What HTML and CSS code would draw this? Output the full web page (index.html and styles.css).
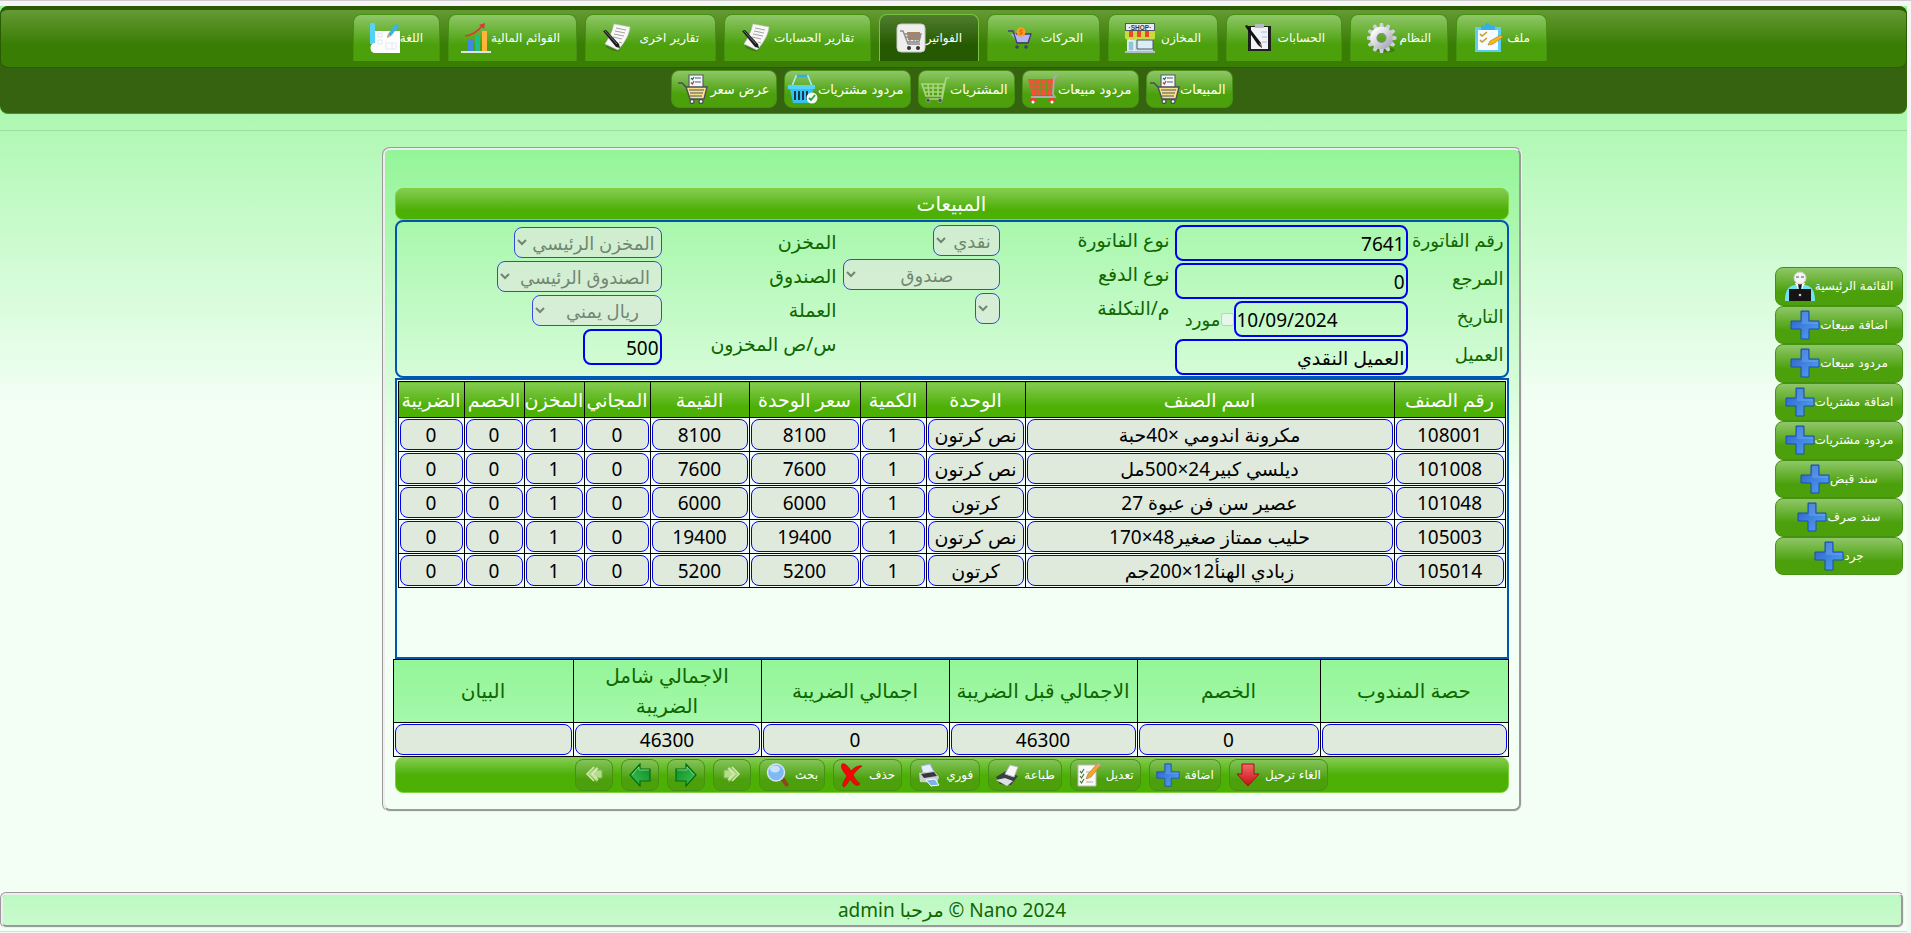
FILE: index.html
```html
<!DOCTYPE html>
<html lang="ar" dir="rtl">
<head>
<meta charset="utf-8">
<title>المبيعات</title>
<link rel="stylesheet" href="styles.css">
</head>
<body>
<svg class="sprite" aria-hidden="true">
  <defs>
    <linearGradient id="gBlue" x1="0" y1="0" x2="1" y2="1"><stop offset="0" stop-color="#2a5fc8"/><stop offset="1" stop-color="#55a5f5"/></linearGradient>
    <linearGradient id="gGreen" x1="0" y1="0" x2="1" y2="1"><stop offset="0" stop-color="#0c8a20"/><stop offset="1" stop-color="#3fc45a"/></linearGradient>
    <linearGradient id="gRed" x1="0" y1="0" x2="0" y2="1"><stop offset="0" stop-color="#f06a6a"/><stop offset="1" stop-color="#c80d14"/></linearGradient>
    <linearGradient id="gSilver" x1="0" y1="0" x2="1" y2="1"><stop offset="0" stop-color="#fff"/><stop offset="1" stop-color="#a9a9b8"/></linearGradient>
  </defs>
  <symbol id="plus" viewBox="0 0 30 30">
    <path d="M11 1h8v10h10v8H19v10h-8V19H1v-8h10z" fill="url(#gBlue)" stroke="#1d4fa8"/>
    <path d="M12 2h6v10h10v2H12z" fill="#7db4f5" opacity=".35"/>
  </symbol>
  <symbol id="paper" viewBox="0 0 30 30">
    <path d="M10 5l16 2-9 21c-4 1-9-1-13-4z" fill="#2d4d18" opacity=".4"/>
    <path d="M12 1l16 3c-1 8-5 15-12 23L3 21C7 15 10 9 12 1z" fill="#f8f8f8" stroke="#c9c9c9" stroke-width=".6"/>
    <path d="M14 5l10 2M13 8l10 2M12 11l10 2M11 14l9 2M17 19l3 1" stroke="#999" stroke-width=".9"/>
    <path d="M1 8l3-1 13 14 1 4-4-1z" fill="#1d1d1d"/><path d="M3 8l12 13" stroke="#888" stroke-width=".8"/>
  </symbol>
  <symbol id="cartlist" viewBox="0 0 30 30">
    <path d="M11 1h14v13H11z" fill="#f5f7fa" stroke="#555f68" stroke-width="1.2"/>
    <path d="M17 4h6M17 8h6" stroke="#555f68" stroke-width="1.2"/>
    <path d="M13 4l1.500 1.500L16 3" fill="none" stroke="#11765d" stroke-width="1.200"/>
    <path d="M13 8.500l1.500 1.500L16 7" fill="none" stroke="#b3353c" stroke-width="1.200"/>
    <path d="M8 13h21l-3 12H12z" fill="#fbe08c" stroke="#4a5057" stroke-width="1.4"/>
    <path d="M0 9h4l4 4" fill="none" stroke="#4a5057" stroke-width="1.600"/>
    <path d="M11 16h15M12 19h13M12 22h12" stroke="#4a5057" stroke-width="1.200"/>
    <circle cx="14" cy="27.500" r="2" fill="#fff" stroke="#4a5057" stroke-width="1.300"/><circle cx="23" cy="27.500" r="2" fill="#fff" stroke="#4a5057" stroke-width="1.300"/>
  </symbol>
  <symbol id="arrow" viewBox="0 0 24 24">
    <path d="M2 6h10V1l10 11-10 11v-5H2z" fill="url(#gGreen)" stroke="#046b16" stroke-width="1.200"/>
    <path d="M3 7h10V4l7 8" fill="none" stroke="#8be59a" stroke-width=".8"/>
  </symbol>
  <symbol id="arrowdim" viewBox="0 0 24 24">
    <path d="M4 7h5V3l9 8-9 8v-4H4z" fill="#b5dc8a" stroke="#7fb550"/><path d="M12 4l7 7-7 7M8 5l6 6-6 6" fill="none" stroke="#d5ecb4" stroke-width="1.500"/>
    <path d="M6 22h13" stroke="#4f9422" opacity=".6"/>
  </symbol>
</svg>

<header class="top">
  <nav class="menu" aria-label="القائمة">
    <a class="tab" href="#"><span>ملف</span><svg viewBox="0 0 30 30"><path d="M2 4h26v25H2z" fill="#5ecdf0"/><path d="M5 7h20v20H5z" fill="#f5fbff"/><path d="M8 3h4c0-4 5-4 6 0h4v4H8z" fill="#38afe0"/><path d="M7 11l2 2 5-4M7 17l2 2 5-4" fill="none" stroke="#c89a28" stroke-width="1.600"/><path d="M15 22l2-4 11-6 2 2-10 7z" fill="#f5b81c" stroke="#a87510" stroke-width=".6"/></svg></a>
    <a class="tab" href="#"><span>النظام</span><svg viewBox="0 0 30 30"><ellipse cx="19" cy="27" rx="9" ry="2.500" fill="#244d0a" opacity=".4"/><g fill="#cfcfdd"><path id="tooth" d="M12 5l1-5h3l1 5z"/><use href="#tooth" transform="rotate(30 14.500 15)"/><use href="#tooth" transform="rotate(60 14.500 15)"/><use href="#tooth" transform="rotate(90 14.500 15)"/><use href="#tooth" transform="rotate(120 14.500 15)"/><use href="#tooth" transform="rotate(150 14.500 15)"/><use href="#tooth" transform="rotate(180 14.500 15)"/><use href="#tooth" transform="rotate(210 14.500 15)"/><use href="#tooth" transform="rotate(240 14.500 15)"/><use href="#tooth" transform="rotate(270 14.500 15)"/><use href="#tooth" transform="rotate(300 14.500 15)"/><use href="#tooth" transform="rotate(330 14.500 15)"/></g><circle cx="14.500" cy="15" r="8" fill="none" stroke="url(#gSilver)" stroke-width="6.500"/><circle cx="14.500" cy="15" r="4.500" fill="none" stroke="#8d8da3" stroke-width="1.200"/></svg></a>
    <a class="tab" href="#"><span>الحسابات</span><svg viewBox="0 0 30 30"><path d="M5 3h23v25H5z" fill="#1f1f1f"/><path d="M8 4h17v22H8z" fill="#f0f3f8"/><path d="M12 1h9v4h-9z" fill="#b5b9c0"/><path d="M18 9h6M19 14h5M19 19h5" stroke="#a8bfe0" stroke-width="1.200"/><path d="M2 3l2-1 14 18 1 5-4-3z" fill="#111"/><path d="M16 20l2 1 1 4z" fill="#d09048"/></svg></a>
    <a class="tab" href="#"><span>المخازن</span><svg viewBox="0 0 30 30"><path d="M2 14h26v15H2z" fill="#cde3e6"/><path d="M0 0h30v8H0z" fill="#4e5566"/><path d="M1 1h28v6H1z" fill="#e9edf2"/><text x="15" y="6.500" font-size="6.500" font-weight="700" text-anchor="middle" fill="#333a48" font-family="Liberation Sans">·SHOP·</text><path d="M0 8h30v5a2.500 2.500 0 0 1-5 2 2.500 2.500 0 0 1-5 0 2.500 2.500 0 0 1-5 0 2.500 2.500 0 0 1-5 0 2.500 2.500 0 0 1-5 0 2.500 2.500 0 0 1-5-2z" fill="#c8dc3c"/><path d="M4 8h4v6H4zM12 8h4v6h-4zM20 8h4v6h-4z" fill="#f0442e"/><path d="M3 18h6v10H3z" fill="#8cc6de" stroke="#fff"/><path d="M12 17h16v9H12z" fill="#d8f0f5" stroke="#4e5566"/><path d="M0 28h30v2H0z" fill="#b8bcc6"/></svg></a>
    <a class="tab" href="#"><span>الحركات</span><svg viewBox="0 0 30 30"><path d="M7 11h20l-3 8H13z" fill="#b7b4f0"/><path d="M4 8h5l4 12h11l3-9H12" fill="none" stroke="#443a80" stroke-width="1.300"/><circle cx="17" cy="9" r="4.500" fill="#ff9d1e"/><path d="M19 7h-3v2h2v2h-3" fill="none" stroke="#e05a10"/><circle cx="13" cy="24" r="1.800" fill="#443a80"/><circle cx="22" cy="24" r="1.800" fill="#443a80"/></svg></a>
    <a class="tab active" href="#" aria-current="page"><span>الفواتير</span><svg viewBox="0 0 30 30"><rect x="1" y="1" width="28" height="28" rx="4" fill="#eeeeec" stroke="#c9c9c9"/><path d="M11 9h13v8H12z" fill="#b88058"/><path d="M4 8h3l5 13h12M8 11h17l-2 8H11M9 14h16M14 11v8M18 11v8M21 11v8" fill="none" stroke="#8b8b8b" stroke-width="1.300"/><circle cx="13" cy="25" r="2" fill="#333"/><circle cx="22" cy="25" r="2" fill="#333"/></svg></a>
    <a class="tab" href="#"><span>تقارير الحسابات</span><svg><use href="#paper"/></svg></a>
    <a class="tab" href="#"><span>تقارير اخرى</span><svg><use href="#paper"/></svg></a>
    <a class="tab" href="#"><span>القوائم المالية</span><svg viewBox="0 0 30 30"><path d="M7 16h5v12H7z" fill="#3f8ae0"/><path d="M14 12h5v16h-5z" fill="#1dbf8e"/><path d="M21 8h5v20h-5z" fill="#ffb43c"/><path d="M0 29h30" stroke="#dfe5e0" stroke-width="2"/><path d="M4 13C12 12 17 8 21 3" fill="none" stroke="#e03535" stroke-width="1.500"/><path d="M18 2l6-2-1 6z" fill="#e03535"/></svg></a>
    <a class="tab" href="#"><span>اللغة</span><svg viewBox="0 0 30 30"><path d="M0 2a2.500 2.500 0 0 1 5 0v19H0z" fill="#55d2f5"/><path d="M5 8h25v22H5c-6 0-6-10 0-10z" fill="#fbfdff"/><path d="M8 10h4v4H8zM8 17h4v4H8zM16 20h10v6H16zM22 20v6" fill="none" stroke="#e4e9ee"/><path d="M17 15l1-4 8-10 3 2-8 10z" fill="#38b5e6"/><path d="M17 15l1-4 3 2z" fill="#e6a860"/></svg></a>
  </nav>
  <nav class="submenu" aria-label="الفواتير">
    <a class="pill" href="#"><span>المبيعات</span><svg><use href="#cartlist"/></svg></a>
    <a class="pill" href="#"><span>مردود مبيعات</span><svg viewBox="0 0 30 30"><path d="M0 5h27l-3 16H4z" fill="#f5503c"/><path d="M2 10h24M3 15h22M7 6l1 15M13 6v15M19 6l-1 15" stroke="#55a51a" stroke-width="1.200"/><path d="M29 1l-3 3-1 16 2 3H3" fill="none" stroke="#a8adb0" stroke-width="1.800"/><path d="M1 28a4 4 0 0 1 8 0zM20 28a4 4 0 0 1 8 0z" fill="#f0402e"/><circle cx="5" cy="28" r="1.500" fill="#fff"/><circle cx="24" cy="28" r="1.500" fill="#fff"/></svg></a>
    <a class="pill" href="#"><span>المشتريات</span><svg viewBox="0 0 30 30"><path d="M2 10h22l-2 12H6zM3 14h20M4 18h19M8 10l1 12M13 10v12M18 10v12M29 4h-3l-4 21H7" fill="none" stroke="#a9d57e" stroke-width="1.700"/><circle cx="8" cy="26.500" r="2" fill="#445245" stroke="#8aa382"/><circle cx="20" cy="26.500" r="2" fill="#445245" stroke="#8aa382"/></svg></a>
    <a class="pill" href="#"><span>مردود مشتريات</span><svg viewBox="0 0 30 30"><path d="M4 12L8 2h12l4 10" fill="none" stroke="#a8ecff" stroke-width="1.600"/><path d="M9 2h10" stroke="#2bb0e0" stroke-width="2.500"/><path d="M0 11h27v4H0z" fill="#54d5f8"/><path d="M2 15h23l-3 14H5z" fill="#35c2ee"/><path d="M7 17v9M11 17v9M15 17v9M19 17v9" stroke="#17364f" stroke-width="2"/><circle cx="24" cy="24" r="5.500" fill="#f5faf5"/><path d="M21 24l2 2 4-5" fill="none" stroke="#27a045" stroke-width="1.800"/></svg></a>
    <a class="pill" href="#"><span>عرض سعر</span><svg><use href="#cartlist"/></svg></a>
  </nav>
</header>

<hr class="divider">

<main class="page">
  <aside class="side">
    <a class="pill" href="#"><span>القائمة الرئيسية</span><svg viewBox="0 0 30 30"><path d="M0 30c0-10 3-15 10-16h10c7 1 10 6 10 16z" fill="#6fe3f5"/><path d="M10 12h10l-5 10z" fill="#fff"/><path d="M13 13h4l-1 6h-2z" fill="#1e1e1e"/><circle cx="15" cy="7" r="6" fill="#f3f3f3" stroke="#d0d0d0"/><path d="M11 6h3M16 6h3" stroke="#555"/><path d="M4 18h22v12H4z" fill="#141414"/><circle cx="15" cy="24" r="1.300" fill="#ccc"/></svg></a>
    <a class="pill" href="#"><span>اضافة مبيعات</span><svg><use href="#plus"/></svg></a>
    <a class="pill" href="#"><span>مردود مبيعات</span><svg><use href="#plus"/></svg></a>
    <a class="pill" href="#"><span>اضافة مشتريات</span><svg><use href="#plus"/></svg></a>
    <a class="pill" href="#"><span>مردود مشتريات</span><svg><use href="#plus"/></svg></a>
    <a class="pill" href="#"><span>سند قبض</span><svg><use href="#plus"/></svg></a>
    <a class="pill" href="#"><span>سند صرف</span><svg><use href="#plus"/></svg></a>
    <a class="pill" href="#"><span>جرد</span><svg><use href="#plus"/></svg></a>
  </aside>

  <form class="invoice">
    <h1 class="title">المبيعات</h1>

    <div class="fields">
      <div class="group group-main">
        <label for="no">رقم الفاتورة</label><input id="no" type="text" value="7641">
        <label for="ref">المرجع</label><input id="ref" type="text" value="0">
        <label for="date">التاريخ</label>
        <div class="date-row"><input id="date" type="text" dir="ltr" value="10/09/2024"><input id="supplier" class="check" type="checkbox" disabled><label for="supplier">مورد</label></div>
        <label for="client">العميل</label><input id="client" type="text" value="العميل النقدي">
      </div>
      <div class="group group-pay">
        <label for="kind">نوع الفاتورة</label><select id="kind" class="w-kind" disabled><option>نقدي</option></select>
        <label for="pay">نوع الدفع</label><select id="pay" class="w-pay" disabled><option>صندوق</option></select>
        <label for="cost">م/التكلفة</label><select id="cost" class="w-cost" disabled><option></option></select>
      </div>
      <div class="group group-store">
        <label for="store">المخزن</label><select id="store" class="w-store" disabled><option>المخزن الرئيسي</option></select>
        <label for="box">الصندوق</label><select id="box" class="w-box" disabled><option>الصندوق الرئيسي</option></select>
        <label for="cur">العملة</label><select id="cur" class="w-cur" disabled><option>ريال يمني</option></select>
        <label for="stock">س/ص المخزون</label><input id="stock" class="w-stock" type="text" value="500">
      </div>
    </div>

    <div class="lines">
      <table class="items">
        <colgroup><col class="c-no"><col class="c-name"><col class="c-unit"><col class="c-s"><col class="c-no"><col class="c-unit"><col class="c-s"><col class="c-xs"><col class="c-xs"><col class="c-s"></colgroup>
        <thead><tr><th>رقم الصنف</th><th>اسم الصنف</th><th>الوحدة</th><th>الكمية</th><th>سعر الوحدة</th><th>القيمة</th><th>المجاني</th><th>المخزن</th><th>الخصم</th><th>الضريبة</th></tr></thead>
        <tbody>
          <tr><td><input aria-label="رقم الصنف" value="108001"></td><td><input aria-label="اسم الصنف" value="مكرونة اندومي ×40حبة"></td><td><input aria-label="الوحدة" value="نص كرتون"></td><td><input aria-label="الكمية" value="1"></td><td><input aria-label="سعر الوحدة" value="8100"></td><td><input aria-label="القيمة" value="8100"></td><td><input aria-label="المجاني" value="0"></td><td><input aria-label="المخزن" value="1"></td><td><input aria-label="الخصم" value="0"></td><td><input aria-label="الضريبة" value="0"></td></tr>
          <tr><td><input aria-label="رقم الصنف" value="101008"></td><td><input aria-label="اسم الصنف" value="ديلسي كبير24×500مل"></td><td><input aria-label="الوحدة" value="نص كرتون"></td><td><input aria-label="الكمية" value="1"></td><td><input aria-label="سعر الوحدة" value="7600"></td><td><input aria-label="القيمة" value="7600"></td><td><input aria-label="المجاني" value="0"></td><td><input aria-label="المخزن" value="1"></td><td><input aria-label="الخصم" value="0"></td><td><input aria-label="الضريبة" value="0"></td></tr>
          <tr><td><input aria-label="رقم الصنف" value="101048"></td><td><input aria-label="اسم الصنف" value="عصير سن فن عبوة 27"></td><td><input aria-label="الوحدة" value="كرتون"></td><td><input aria-label="الكمية" value="1"></td><td><input aria-label="سعر الوحدة" value="6000"></td><td><input aria-label="القيمة" value="6000"></td><td><input aria-label="المجاني" value="0"></td><td><input aria-label="المخزن" value="1"></td><td><input aria-label="الخصم" value="0"></td><td><input aria-label="الضريبة" value="0"></td></tr>
          <tr><td><input aria-label="رقم الصنف" value="105003"></td><td><input aria-label="اسم الصنف" value="حليب ممتاز صغير48×170"></td><td><input aria-label="الوحدة" value="نص كرتون"></td><td><input aria-label="الكمية" value="1"></td><td><input aria-label="سعر الوحدة" value="19400"></td><td><input aria-label="القيمة" value="19400"></td><td><input aria-label="المجاني" value="0"></td><td><input aria-label="المخزن" value="1"></td><td><input aria-label="الخصم" value="0"></td><td><input aria-label="الضريبة" value="0"></td></tr>
          <tr><td><input aria-label="رقم الصنف" value="105014"></td><td><input aria-label="اسم الصنف" value="زبادي الهنأ12×200جم"></td><td><input aria-label="الوحدة" value="كرتون"></td><td><input aria-label="الكمية" value="1"></td><td><input aria-label="سعر الوحدة" value="5200"></td><td><input aria-label="القيمة" value="5200"></td><td><input aria-label="المجاني" value="0"></td><td><input aria-label="المخزن" value="1"></td><td><input aria-label="الخصم" value="0"></td><td><input aria-label="الضريبة" value="0"></td></tr>
        </tbody>
      </table>
    </div>

    <table class="totals">
      <colgroup><col class="t-a"><col class="t-b"><col class="t-a"><col class="t-a"><col class="t-a"><col class="t-c"></colgroup>
      <thead><tr><th>حصة المندوب</th><th>الخصم</th><th>الاجمالي قبل الضريبة</th><th>اجمالي الضريبة</th><th>الاجمالي شامل الضريبة</th><th>البيان</th></tr></thead>
      <tbody><tr><td><input aria-label="حصة المندوب" value=""></td><td><input aria-label="الخصم" value="0"></td><td><input aria-label="الاجمالي قبل الضريبة" value="46300"></td><td><input aria-label="اجمالي الضريبة" value="0"></td><td><input aria-label="الاجمالي شامل الضريبة" value="46300"></td><td><input aria-label="البيان" value=""></td></tr></tbody>
    </table>

    <div class="toolbar">
      <button type="button"><span>الغاء ترحيل</span><svg viewBox="0 0 24 24"><path d="M6 1h12v10h5L12 23 1 11h5z" fill="url(#gRed)" stroke="#a50e12"/></svg></button>
      <button type="button"><span>اضافة</span><svg><use href="#plus"/></svg></button>
      <button type="button"><span>تعديل</span><svg viewBox="0 0 24 24"><path d="M1 2h18v21H1z" fill="#fafafa" stroke="#b9bdb5"/><path d="M3 8l1.500 2L7 6M3 13l1.500 2L7 11M3 18l1.500 2L7 16" fill="none" stroke="#3c7c28" stroke-width="1.200"/><path d="M9 9h6M9 19h7" stroke="#aaa"/><path d="M9 16l2-5L20 1l3 2-9 11z" fill="#f5a52a" stroke="#b0701c" stroke-width=".6"/><path d="M19 2l2-2 3 2-2 2z" fill="#e596a8"/></svg></button>
      <button type="button"><span>طباعة</span><svg viewBox="0 0 24 24"><path d="M1 14l10-6 12 5-7 9-11-1z" fill="#3a3f44"/><path d="M10 11l5-9 8 2-4 10z" fill="#f8f8fa" stroke="#b5b9be"/><path d="M1 17l9-2 8 3-6 5z" fill="#dcdfe4"/></svg></button>
      <button type="button"><span>فوري</span><svg viewBox="0 0 24 24"><path d="M6 10L4 3l9-2 4 8z" fill="#e2eefb" stroke="#9db4cf"/><path d="M2 10l15-2 5 6-2 6-17-1z" fill="#c9cdd2"/><path d="M4 11l13-2 3 4-13 2z" fill="#33383d"/><path d="M9 17l9-1 4 6-8 1z" fill="#7fb1ea" stroke="#fff"/></svg></button>
      <button type="button"><span>حذف</span><svg viewBox="0 0 24 24"><path d="M2 1c3-1 6 2 9 7 3-3 7-6 11-5-4 3-7 6-9 9 2 4 4 6 7 9-3 3-6 1-10-5-2 3-3 6-6 8-2-1-2-3 3-11C4 9 0 5 2 1z" fill="#f50505" stroke="#b00" stroke-width=".6"/></svg></button>
      <button type="button"><span>بحث</span><svg viewBox="0 0 24 24"><path d="M14 16l4-2 5 8-3 2z" fill="#8a4a1e"/><circle cx="10" cy="9.500" r="8.500" fill="#7fb9f5" stroke="#d5e3f2" stroke-width="1.500"/><ellipse cx="9" cy="6" rx="5" ry="3.500" fill="#d8ecff" opacity=".8"/></svg></button>
      <button type="button" aria-label="الأول"><svg><use href="#arrowdim"/></svg></button>
      <button type="button" aria-label="السابق"><svg><use href="#arrow"/></svg></button>
      <button type="button" aria-label="التالي"><svg class="flip"><use href="#arrow"/></svg></button>
      <button type="button" aria-label="الأخير"><svg class="flip"><use href="#arrowdim"/></svg></button>
    </div>
  </form>
</main>

<footer class="foot" dir="ltr">admin مرحبا © Nano 2024</footer>
</body>
</html>
```
FILE: styles.css
```css
* { box-sizing: border-box; }

html {
  border-top: 1px solid #ccc;
  background: #f5f5f5;
}

body {
  margin: 5px 4px 0 0;
  min-height: 926px;
  display: flex;
  flex-direction: column;
  font-family: "Noto Sans", "DejaVu Sans", sans-serif;
  font-size: 19px;
  color: #106600;
  background: linear-gradient(#94f598, #f3fff5 400px);
  border-bottom: 1px solid #ddd;
}

a { color: inherit; text-decoration: none; }

.sprite { position: absolute; width: 0; height: 0; }

/* header */
.top {
  border-radius: 8px;
  background: #35630f;
  border-bottom: 1px solid #4b9412;
  overflow: hidden;
  font-size: 13px;
  font-family: "DejaVu Sans", sans-serif;
  color: #fff;
}

.menu, .submenu {
  display: grid;
  justify-content: center;
}

.menu {
  grid-template-columns: 91px 98px 116px 110px 113px 100px 147px 131px 129px 87px;
  gap: 8px;
  padding: 4px 11px 6px 4px;
  border: 1px solid #2a5c04;
  border-top-width: 4px;
  border-radius: 8px;
  background: linear-gradient(#659a35, #3a7d05 60%);
  font-size: 12px;
}

.submenu {
  grid-template-columns: 87px 117px 97px 127px 106px;
  gap: 7px;
  padding: 2px 4px 5px 0;
}

.tab, .pill {
  display: flex;
  align-items: center;
  justify-content: space-between;
  white-space: nowrap;
  border: 1px solid #459212;
  background: linear-gradient(#8fc768, #4ba00c 65%);
}

.tab {
  height: 47px;
  padding: 0 16px;
  border-bottom: 0;
  border-radius: 8px 8px 0 0;
}

.tab.active {
  border-color: #7ac142;
  background: linear-gradient(#507d2e, #265a02 65%);
}

.pill {
  height: 38px;
  padding: 0 6px;
  border-radius: 8px;
}

.tab svg, .pill svg { width: 30px; height: 30px; flex: none; }

.divider {
  width: 100%;
  height: 1px;
  margin: 16px 0;
  border: 0;
  background: #a0dba5;
}

/* page body */
.page {
  flex: 1;
  display: grid;
  grid-template-columns: 1fr minmax(0, 1140px) 1fr;
  align-items: start;
  padding-right: 4px;
}

.side {
  display: grid;
  grid-template-rows: repeat(8, 1fr);
  width: 128px;
  height: 308px;
  margin-top: 120px;
  font-family: "DejaVu Sans", sans-serif;
  font-size: 12px;
  color: #fff;
}

.side .pill { height: auto; justify-content: center; }

.invoice {
  padding: 38px 10px 16px;
  border: 3px groove #eee;
  border-radius: 8px;
  background: linear-gradient(#94f598, #f3fff5 330px);
}

.title {
  height: 32px;
  margin: 0;
  border: 1px solid #7ed13c;
  border-radius: 8px;
  font-size: 20px;
  font-weight: 400;
  line-height: 30px;
  text-align: center;
  color: #fff;
  background: linear-gradient(#85cc52, #4db005 70%);
}

.fields {
  display: flex;
  border: 2px solid #0056b3;
  border-radius: 8px;
  height: 158px;
}

.group {
  display: grid;
  align-content: start;
}

.group label { line-height: 30px; white-space: nowrap; }
.group-main label { font-size: 18px; }

.group-main { grid-template-columns: 96px 233px; row-gap: 2px; padding: 3px 3px 0 0; }
.group-pay { grid-template-columns: 170px 158px; row-gap: 3px; padding: 3px 5px 0 0; }
.group-store { grid-template-columns: 175px 166px; row-gap: 3px; padding: 5px 5px 0 0; }

.fields input, .fields select {
  font: inherit;
  border-radius: 8px;
}

.fields input[type="text"] {
  width: 100%;
  height: 36px;
  padding: 2px 1px 0;
  border: 2px solid #00e;
  color: #000;
  background: transparent;
}

.fields select {
  height: 31px;
  padding: 0;
  border: 1px solid #00e;
  font-size: 18px;
  text-align: center;
  color: #555;
  background: #dfeadd;
}

.date-row { display: flex; align-items: center; }
.fields .date-row input[type="text"] { width: 174px; }
.check { width: 13px; height: 13px; margin: 0; }

.w-kind { width: 67px; }
.w-pay { width: 157px; }
.w-cost { width: 25px; }
.w-store { width: 148px; }
.w-box { width: 165px; }
.w-cur { width: 130px; }
.fields input.w-stock { width: 79px; }

/* tables */
.lines {
  height: 281px;
  padding: 1px;
  border: 2px solid #0056b3;
  background: #f3fff5;
}

table {
  width: 100%;
  table-layout: fixed;
  border-collapse: collapse;
}

th, td { border: 1px solid #000; padding: 1px; height: 34px; }

th { font-weight: 400; font-size: 20px; white-space: nowrap; }

.items th {
  height: 36px;
  padding: 0;
  color: #fff;
  font-size: 19px;
  line-height: 30px;
  background: linear-gradient(#85cc52, #4db005 70%);
}

.totals th {
  height: 63px;
  padding: 0 4px;
  line-height: 30px;
  white-space: normal;
  background: linear-gradient(#94f598, #a4f8aa);
}

td input {
  display: block;
  width: 100%;
  height: 31px;
  padding: 0;
  border: 1px solid #00e;
  border-radius: 8px;
  text-align: center;
  font: inherit;
  color: #000;
  background: #dfeadd;
}

.c-no { width: 111px; }
.c-name { width: 369px; }
.c-unit { width: 99px; }
.c-s { width: 66px; }
.c-xs { width: 60px; }
.t-a { width: 188px; }
.t-b { width: 183px; }
.t-c { width: 180px; }

.toolbar {
  display: flex;
  justify-content: center;
  align-items: center;
  gap: 8px;
  height: 36px;
  border: 1px solid #7ed13c;
  border-radius: 8px;
  background: linear-gradient(#85cc52, #4db005 50%);
}

.toolbar button {
  display: flex;
  align-items: center;
  gap: 5px;
  height: 32px;
  padding: 0 6px;
  border: 1px solid #459212;
  border-radius: 8px;
  font: 12px "DejaVu Sans", sans-serif;
  color: #fff;
  background: linear-gradient(#84c35a, #4ba00c 65%);
}

.toolbar svg { width: 24px; height: 24px; }
.flip { transform: scaleX(-1); }

.foot {
  height: 36px;
  margin: 0 3px 3px 0;
  border: 3px groove #eee;
  border-radius: 6px;
  line-height: 30px;
  text-align: center;
  background: linear-gradient(#bdf9c2, #c8facd);
}
```
